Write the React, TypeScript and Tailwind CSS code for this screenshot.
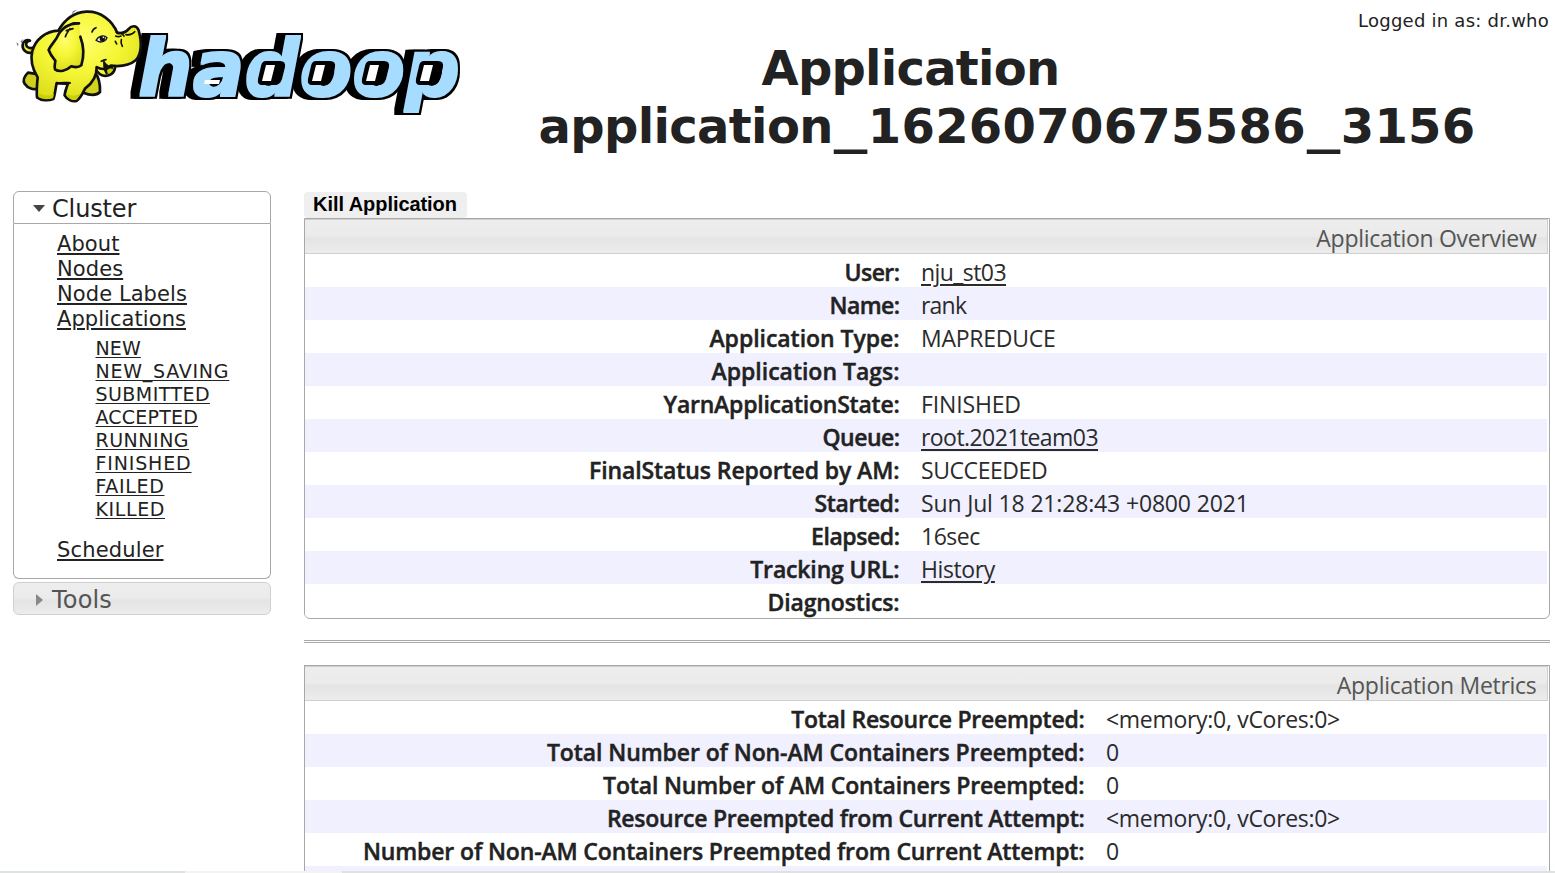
import type { ReactNode } from "react";

type Row = { label: string; lt: string; value?: string; vt?: string; link?: boolean };

const overview: Row[] = [
  { label: "User:", lt: "tracking-[-0.55px]", value: "nju_st03", vt: "tracking-[-0.57px]", link: true },
  { label: "Name:", lt: "tracking-[-0.57px]", value: "rank", vt: "tracking-[-0.8px]" },
  { label: "Application Type:", lt: "tracking-[-0.04px]", value: "MAPREDUCE", vt: "tracking-[-0.25px]" },
  { label: "Application Tags:", lt: "tracking-[-0.01px]" },
  { label: "YarnApplicationState:", lt: "tracking-[-0.23px]", value: "FINISHED", vt: "tracking-[-0.15px]" },
  { label: "Queue:", lt: "tracking-[-0.52px]", value: "root.2021team03", vt: "tracking-[-0.56px]", link: true },
  { label: "FinalStatus Reported by AM:", lt: "tracking-[-0.1px]", value: "SUCCEEDED", vt: "tracking-[-0.43px]" },
  { label: "Started:", lt: "tracking-[-0.37px]", value: "Sun Jul 18 21:28:43 +0800 2021", vt: "tracking-[-0.16px]" },
  { label: "Elapsed:", lt: "tracking-[-0.45px]", value: "16sec", vt: "tracking-[-0.5px]" },
  { label: "Tracking URL:", lt: "tracking-[-0.15px]", value: "History", vt: "tracking-[-0.4px]", link: true },
  { label: "Diagnostics:", lt: "tracking-[-0.13px]" },
];

const metrics: Row[] = [
  { label: "Total Resource Preempted:", lt: "tracking-[-0.27px]", value: "<memory:0, vCores:0>", vt: "tracking-[-0.3px]" },
  { label: "Total Number of Non-AM Containers Preempted:", lt: "tracking-[-0.09px]", value: "0" },
  { label: "Total Number of AM Containers Preempted:", lt: "tracking-[-0.15px]", value: "0" },
  { label: "Resource Preempted from Current Attempt:", lt: "tracking-[-0.27px]", value: "<memory:0, vCores:0>", vt: "tracking-[-0.3px]" },
  { label: "Number of Non-AM Containers Preempted from Current Attempt:", lt: "tracking-[-0.14px]", value: "0" },
  { label: "", lt: "" },
];

const states: [string, string][] = [
  ["NEW", "tracking-[0.1px]"],
  ["NEW_SAVING", "tracking-[0.75px]"],
  ["SUBMITTED", "tracking-[0.44px]"],
  ["ACCEPTED", "tracking-[0.2px]"],
  ["RUNNING", "tracking-[0.5px]"],
  ["FINISHED", "tracking-[0.84px]"],
  ["FAILED", "tracking-[0.66px]"],
  ["KILLED", "tracking-[0.6px]"],
];

const glossy = "bg-[linear-gradient(to_bottom,#ededed_0%,#ebebeb_48%,#e4e4e4_56%,#e7e7e7_72%,#ececec_100%)]";

const holes = [259, 309, 363, 417];

function Logo() {
  return (
    <svg className="block h-[125px] w-[470px]" viewBox="0 0 470 125">
      <defs>
        <radialGradient id="skin" cx="45%" cy="32%" r="65%">
          <stop offset="0" stopColor="#ffff70" />
          <stop offset="0.55" stopColor="#f5f635" />
          <stop offset="1" stopColor="#dfe020" />
        </radialGradient>
        <filter id="block" filterUnits="userSpaceOnUse" x="110" y="20" width="360" height="105" colorInterpolationFilters="sRGB">
          <feMorphology in="SourceGraphic" operator="dilate" radius="1 1" result="face" />
          <feMorphology in="SourceAlpha" operator="dilate" radius="3 3" result="rim" />
          <feOffset in="rim" dx="-4" result="rim2" />
          <feOffset in="rim" dx="-7" result="rim3" />
          <feMerge>
            <feMergeNode in="rim3" />
            <feMergeNode in="rim2" />
            <feMergeNode in="rim" />
            <feMergeNode in="face" />
          </feMerge>
        </filter>
      </defs>
      <text
        x={138}
        y={95.5}
        fontSize={78}
        fontWeight={700}
        fontStyle="italic"
        textLength={322}
        lengthAdjust="spacingAndGlyphs"
        fontFamily="'DejaVu Sans', sans-serif"
        fill="#a5dcff"
        filter="url(#block)"
      >
        hadoop
      </text>
      {holes.map((x) => (
        <g key={x} transform={`translate(${x} 61)`}>
          <path d="M7 0H21Q27 0 26 6L23 18Q21 24 16 24H3Q-2 24 -1 18L2 5Q3 0 7 0Z" fill="#000" />
          <path d="M7 4H16L12 20H3Z" fill="#fff" />
        </g>
      ))}
      <path d="M205 80H220L219 84H204Z" fill="#fff" />
      <g transform="scale(.33333)" stroke="#111" strokeWidth="8" strokeLinejoin="round" strokeLinecap="round" fill="url(#skin)">
        <path d="M95 158C80 162 66 149 68 134c2-12 12-16 22-12-12 1-14 12-9 18 4 4 11 5 17 3" />
        <path d="M84 218c-10 10-17 22-10 33 9 14 28 20 40 14l3-42Z" fill="#cfcf1d" />
        <path d="M285 218c10 12 16 33 15 58-12 12-35 8-50 2l-10-50Z" fill="#d2d31c" />
        <path d="M276 190c6 13 12 27 30 36 18 6 36 -4 39-22 1-8-6-10-12-6" />
        <path d="M175 92c-38 2-68 25-78 61-7 27 3 58 16 79-2 20-4 39-2 60 13 10 33 11 49 5 5-12 6-30 10-48 12 3 22 2 34 2-4 11-10 22-10 35 7 13 22 20 35 17 13-8 20-24 26-37 20-15 36-38 35-65 14 9 32 8 42-4 26 3 56 0 75-16 18-18 19-54 9-90-7-18-22-13-30-4-7 8-20 14-34 12-15-38-51-66-93-64-39 2-66 26-84 57Z" />
        <path d="M311 182c-1 15 1 31 8 40 9-2 18-10 19-20-13-2-21-10-27-20Z" fill="#111" strokeWidth="3" />
        <path d="M321 211c7-7 14-7 18-3-3 8-8 13-16 13Z" fill="#c6d300" stroke="none" />
        <path d="M172 251c12-5 22-3 38-2M199 267c-2 8-5 14-5 19" fill="none" strokeWidth="6" />
        <path d="M118 279c12 9 30 10 44 2l-3 14c-16 4-32 3-43-3ZM200 280c12 10 28 10 40 0l-9 18c-12 6-28-2-31-18Z" fill="#cbd000" stroke="none" />
        <path d="M237 70c-33 0-55 16-67 44-10 15-20 25-24 36 5 15 13 24 20 32-1 12-4 19-1 26 13 10 35 4 49-9 12 4 24 2 30-3 9-29 8-57-3-86" />
        <path d="M237 70c-8-2-16-2-24 1M210 86c-5 8-11 14-14 24M199 92l20-6" fill="none" strokeWidth="5" />
        <path d="M288 121c7-13 23-18 33-8-3 11-20 18-33 8Z" fill="#fff" strokeWidth="4" />
        <circle cx="307" cy="116" r="8" fill="#111" stroke="none" />
        <circle cx="310" cy="112" r="2.5" fill="#fff" stroke="none" />
        <path d="M276 96c2-7 6-11 12-13M304 184c5-3 9-5 14-5M349 97c10-1 18 4 23 11M347 108c6 3 11 2 16 0M346 124l4 8M364 119c-2 8-1 14 3 20M378 104c12 2 21-3 26-9" fill="none" strokeWidth="5" />
        <path d="M213 48l6-15 14-4-12 8ZM53 139l-4-12 7 5ZM62 124l8-8-6 14Z" fill="#777" stroke="none" />
      </g>
    </svg>
  );
}

function SideLink({ children, className }: { children: ReactNode; className: string }) {
  return (
    <li>
      <a href="#" className={`underline ${className}`}>{children}</a>
    </li>
  );
}

function Underscore() {
  return <span className="inline-block w-[35px] scale-x-[1.4] text-center tracking-normal">_</span>;
}

function Panel({ title, rows, cols, className }: { title: string; rows: Row[]; cols: string; className: string }) {
  return (
    <section className={`shrink-0 overflow-hidden border border-[#a8a8a8] pr-px font-['Open_Sans',sans-serif] ${className}`}>
      <h2 className={`h-[35px] border-t border-r border-b border-[#cfcfcf] pt-[3px] pr-[10.5px] text-right text-[23px] leading-[30px] tracking-[-0.28px] text-[#555] ${glossy}`}>
        {title}
      </h2>
      <div className="mr-px">
        {rows.map((r, i) => (
          <div
            key={i}
            className={`grid h-[33px] pt-[3px] text-[23px] leading-[30px] whitespace-nowrap odd:bg-white even:bg-[#f0f0ff] ${cols}`}
          >
            <div className={`text-right font-semibold [-webkit-text-stroke:0.45px_#222] ${r.lt}`}>{r.label}</div>
            <div className={`text-[#2b2b2b] ${r.vt ?? ""}`}>
              {r.link ? (
                <a href="#" className="underline decoration-2 underline-offset-[3px]">{r.value}</a>
              ) : (
                r.value
              )}
            </div>
          </div>
        ))}
      </div>
    </section>
  );
}

export default function App() {
  return (
    <div className="flex h-[873px] w-[1555px] flex-col overflow-hidden bg-white font-['DejaVu_Sans',sans-serif] text-[#222]">
      <header className="flex h-[191px] shrink-0">
        <Logo />
        <div className="flex flex-1 flex-col pr-1.5">
          <div className="h-[39px] pt-[10px] text-right text-[18px] leading-[22px] tracking-[0.24px]">Logged in as: dr.who</div>
          <h1 className="pl-[68.5px] text-[48px] leading-[58px] font-bold whitespace-nowrap">
            <span className="block pl-[223px] tracking-[-0.75px]">Application</span>
            <span className="block">
              <span className="tracking-[-0.65px]">application</span>
              <Underscore />
              <span className="tracking-[0.3px]">1626070675586</span>
              <Underscore />
              <span className="tracking-[0.2px]">3156</span>
            </span>
          </h1>
        </div>
      </header>

      <div className="flex h-[680px] shrink-0 overflow-hidden">
        <nav className="ml-[13px] w-[258px] shrink-0">
          <h3 className="flex h-[33px] items-center rounded-t-[6px] border border-[#a8a8a8] pt-[3px] pl-[19px] text-[24px] leading-[30px]">
            <svg className="mr-[7px] mb-[2px] h-[7px] w-[12px]" viewBox="0 0 12 7"><path d="M0 0H12L6 7Z" fill="#444" /></svg>
            <span className="tracking-[-0.15px]">Cluster</span>
          </h3>
          <div className="h-[355px] rounded-b-[6px] border border-t-0 border-[#a8a8a8] pt-2 pl-[43px]">
            <ul className="text-[21px] leading-[25px] whitespace-nowrap">
              <SideLink className="decoration-2 underline-offset-2 tracking-[0.08px]">About</SideLink>
              <SideLink className="decoration-2 underline-offset-2 tracking-[0.08px]">Nodes</SideLink>
              <SideLink className="decoration-2 underline-offset-2 tracking-[0.08px]">Node Labels</SideLink>
              <SideLink className="decoration-2 underline-offset-2 tracking-[0.06px]">Applications</SideLink>
              <li className="pt-[5px] pb-[17px] pl-[38.5px]">
                <ul className="text-[19px] leading-[23px]">
                  {states.map(([s, t]) => (
                    <SideLink key={s} className={`decoration-1 underline-offset-2 ${t}`}>{s}</SideLink>
                  ))}
                </ul>
              </li>
              <SideLink className="decoration-2 underline-offset-2 tracking-[0.15px]">Scheduler</SideLink>
            </ul>
          </div>
          <h3 className={`mt-[3px] flex h-[33px] items-center rounded-[6px] border border-[#d0d0d0] pt-[3px] pl-[22px] text-[24px] leading-[30px] text-[#555] ${glossy}`}>
            <svg className="mr-[9px] mb-[1px] h-[12px] w-[7px]" viewBox="0 0 7 12"><path d="M0 0V12L7 6Z" fill="#888" /></svg>
            <span className="tracking-[0.18px]">Tools</span>
          </h3>
        </nav>

        <main className="ml-[33px] flex w-[1246px] shrink-0 flex-col">
          <button className="mt-px h-[26px] w-[163px] shrink-0 rounded-[4px] bg-[#efefef] pr-px pb-0.5 text-center font-['Liberation_Sans',sans-serif] text-[20px] leading-[24px] font-bold tracking-[-0.06px] whitespace-nowrap text-black">
            Kill Application
          </button>
          <Panel title="Application Overview" rows={overview} cols="grid-cols-[594.5px_1fr] gap-x-[21.5px]" className="h-[401px] rounded-b-[6px]" />
          <div className="mt-[21px] h-[3px] shrink-0 border-y border-[#a8a8a8]" />
          <Panel title="Application Metrics" rows={metrics} cols="grid-cols-[779.5px_1fr] gap-x-[21.5px]" className="mt-[22px] h-[240px]" />
        </main>
      </div>
      <div className="flex h-[2px] shrink-0">
        <div className="w-[185px] bg-[#dfe2e0]" />
        <div className="w-[157px] bg-[#f3f3f3]" />
        <div className="flex-1 bg-[#dfe2e0]" />
      </div>
    </div>
  );
}
